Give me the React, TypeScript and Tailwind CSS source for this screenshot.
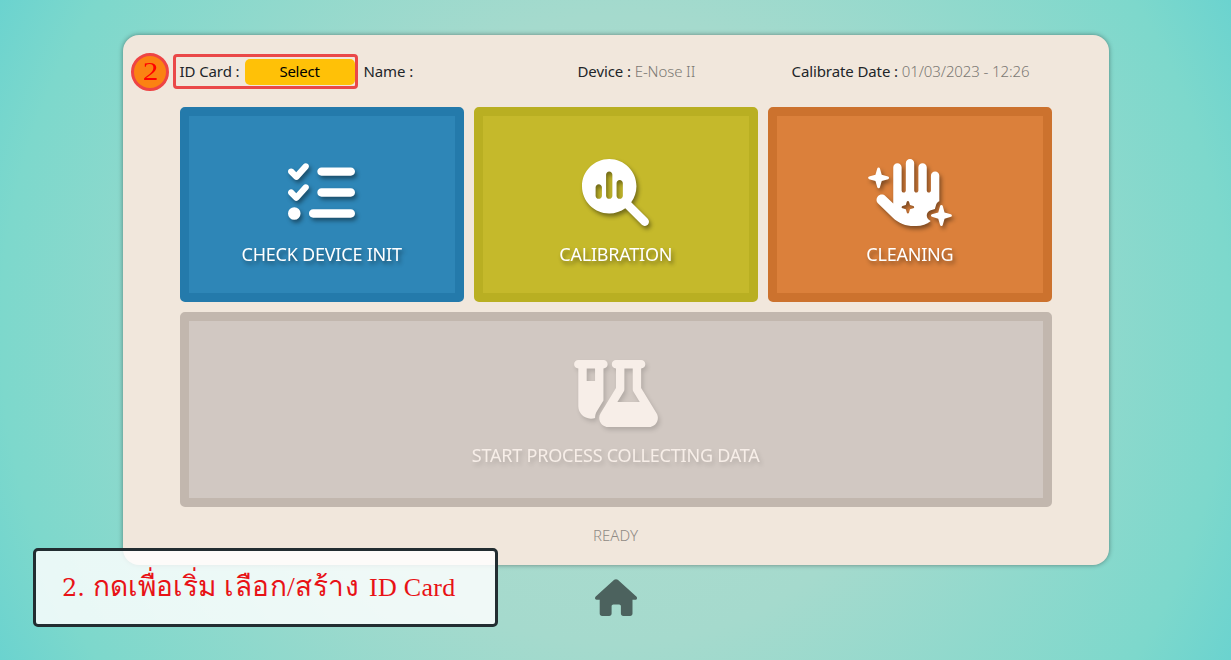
import type { ReactNode } from "react";
import { FaFlaskVial, FaHandSparkles, FaListCheck, FaMagnifyingGlassChart } from "react-icons/fa6";

function Tile({ icon, label, className, effects }: { icon: ReactNode; label: string; className: string; effects: string }) {
  return (
    <button className={`flex h-[195px] flex-col items-center rounded-[5px] border-[9px] ${className}`}>
      <span className={`flex flex-col items-center gap-[14px] ${effects}`}>
        <span>{icon}</span>
        <span className="whitespace-nowrap text-lg leading-7 tracking-[-0.22px]">{label}</span>
      </span>
    </button>
  );
}

const strong = "drop-shadow-[2px_3px_2px_rgba(0,0,0,0.42)]";

export default function App() {
  return (
    <div className="relative h-[660px] w-[1231px] overflow-hidden bg-[radial-gradient(circle_at_center,#b0dccf_0%,#a5dacd_45%,#7dd8cc_88%,#6bd3cf_100%)] pt-[35px] font-['Noto_Sans',sans-serif] text-[#212529]">
      <main className="mx-auto flex h-[530px] w-[986px] flex-col rounded-2xl bg-[#f1e7dc] px-[57px] shadow-[0_0_5px_rgba(0,0,0,0.4)]">
        <header className="mt-[21px] flex h-[30px] items-center whitespace-nowrap text-[15px] leading-5 tracking-[-0.1px]">
          <div className="flex w-[184px] items-center">
            <span className="w-[65px]">ID Card :</span>
            <button className="mt-px h-[26px] w-[110px] rounded-[5px] bg-[#ffc107] pb-px tracking-[-0.25px] text-black">Select</button>
          </div>
          <span className="w-[214px]">Name :</span>
          <span className="w-[214px]">Device : <span className="font-light text-[#7b7873]">E-Nose II</span></span>
          <span>Calibrate Date : <span className="font-light text-[#7b7873]">01/03/2023 - 12:26</span></span>
        </header>
        <section className="mt-[20.5px] grid w-[872.5px] grid-cols-3 gap-[10px]">
          <Tile icon={<FaListCheck className="size-[67px]" />} label="CHECK DEVICE INIT" className="border-[#247aab] bg-[#2e86b7] pt-[43px] text-white" effects={strong} />
          <Tile icon={<FaMagnifyingGlassChart className="size-[67px]" />} label="CALIBRATION" className="border-[#b9af22] bg-[#c5b92b] pt-[43px] text-white" effects={strong} />
          <Tile icon={<FaHandSparkles className="h-[67px] w-[84px]" />} label="CLEANING" className="border-[#cc722e] bg-[#db803b] pt-[43px] text-white" effects={strong} />
          <Tile icon={<FaFlaskVial className="h-[67px] w-[84px]" />} label="START PROCESS COLLECTING DATA" className="col-span-3 border-[#c2b7ae] bg-[#d1c8c2] pt-[39px] text-[#f7eee8]" effects="drop-shadow-[2px_3px_2px_rgba(0,0,0,0.14)]" />
        </section>
        <p className="mt-[18px] text-center text-[15px] font-light leading-5 text-[#8f8a84]">READY</p>
      </main>
      <nav className="mt-[14px] flex justify-center">
        <svg viewBox="0 0 42 37" className="h-[37px] w-[42px] fill-[#4c625e]">
          <path d="M19.2.8c1-.9 2.6-.9 3.6 0l18.5 16.8c1.4 1.2.7 3.2-1 3.2h-2.8v13.7c0 1.4-1 2.4-2.4 2.4h-6.8c-1.4 0-2.4-1-2.4-2.4v-7.2c0-1.1-.8-1.8-1.8-1.8h-5.7c-1 0-1.8.7-1.8 1.8v7.2c0 1.4-1 2.4-2.4 2.4H7.1c-1.4 0-2.4-1-2.4-2.4V20.8H1.6c-1.6 0-2.2-2-.9-3.2Z" />
        </svg>
      </nav>
      <div className="absolute left-[131px] top-[53px] flex size-[38px] items-center justify-center rounded-full border-3 border-[#ee4444] bg-[#fb8212] font-['Liberation_Serif',serif] text-[26px] leading-none text-[#f00]">
        <span className="scale-x-120">2</span>
      </div>
      <div className="absolute left-[173px] top-[54px] h-[35px] w-[185px] rounded-[4px] border-3 border-[#ea4848]" />
      <div className="absolute left-[33px] top-[548px] flex h-[79px] w-[465px] items-center rounded-[5px] border-3 border-[#222d31] bg-white/83 pl-[26px] font-['Liberation_Serif',serif] text-[26px] leading-10 text-[#e81216]">
        <p className="flex items-baseline whitespace-nowrap">
          <span className="w-[31px] font-['DejaVu_Serif',serif] text-[24px]">2.</span>
          <span className="w-[131px] text-[28px] font-medium">กดเพื่อเริ่ม</span>
          <span className="w-[145px] text-[28px] font-medium tracking-[0.5px]">เลือก/สร้าง</span>
          <span className="tracking-[0.3px]">ID Card</span>
        </p>
      </div>
    </div>
  );
}
